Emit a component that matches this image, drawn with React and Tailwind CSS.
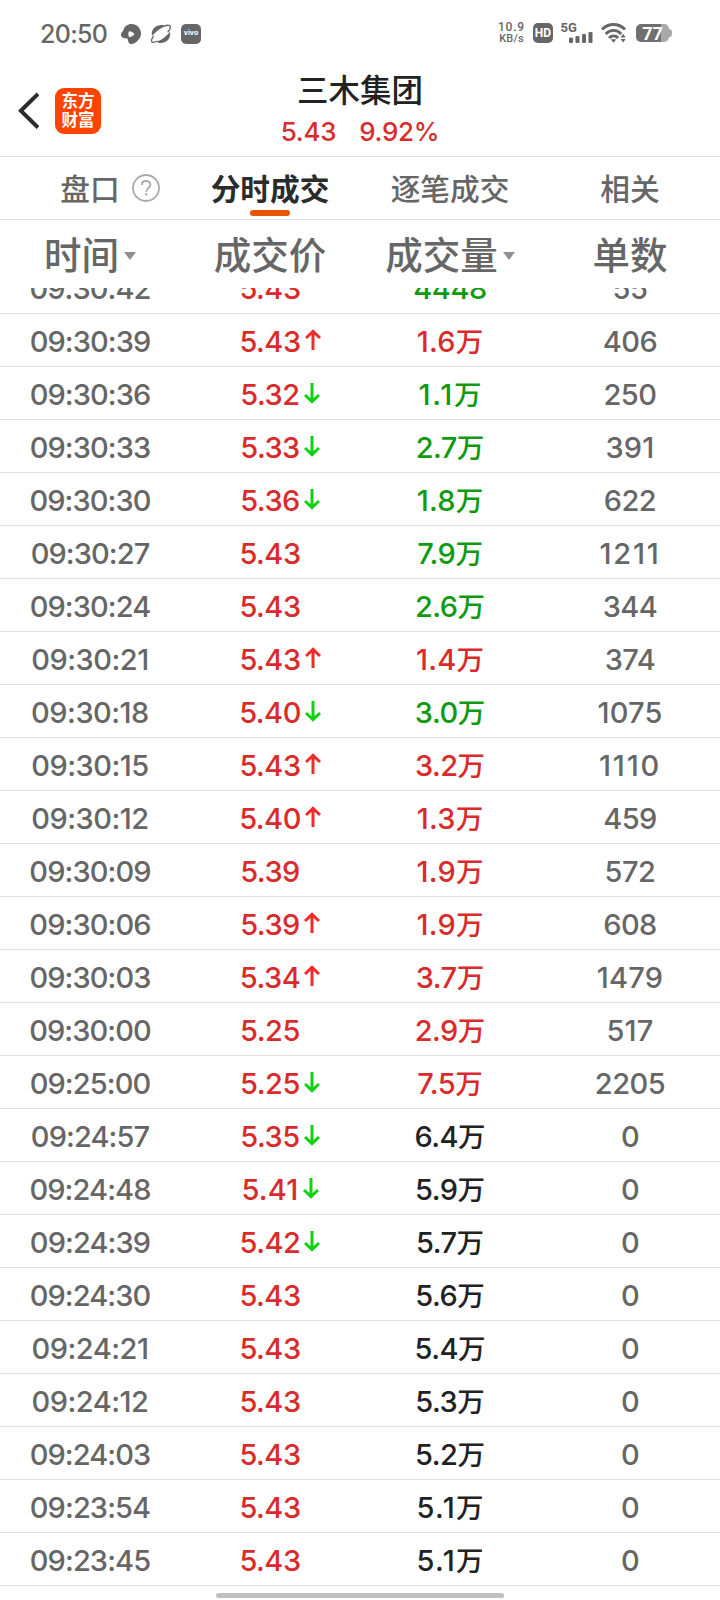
import clsx from 'clsx'

const RED = 'text-[#d92b2b]'
const GREEN = 'text-[#0f9a0f]'
const BLACK = 'text-[#222222]'

// [time, price, direction, volume, volume color, orders]
const trades = [
  ['09:30:42', '5.43', '', '4448', GREEN, '55'],
  ['09:30:39', '5.43', 'up', '1.6万', RED, '406'],
  ['09:30:36', '5.32', 'down', '1.1万', GREEN, '250'],
  ['09:30:33', '5.33', 'down', '2.7万', GREEN, '391'],
  ['09:30:30', '5.36', 'down', '1.8万', GREEN, '622'],
  ['09:30:27', '5.43', '', '7.9万', GREEN, '1211'],
  ['09:30:24', '5.43', '', '2.6万', GREEN, '344'],
  ['09:30:21', '5.43', 'up', '1.4万', RED, '374'],
  ['09:30:18', '5.40', 'down', '3.0万', GREEN, '1075'],
  ['09:30:15', '5.43', 'up', '3.2万', RED, '1110'],
  ['09:30:12', '5.40', 'up', '1.3万', RED, '459'],
  ['09:30:09', '5.39', '', '1.9万', RED, '572'],
  ['09:30:06', '5.39', 'up', '1.9万', RED, '608'],
  ['09:30:03', '5.34', 'up', '3.7万', RED, '1479'],
  ['09:30:00', '5.25', '', '2.9万', RED, '517'],
  ['09:25:00', '5.25', 'down', '7.5万', RED, '2205'],
  ['09:24:57', '5.35', 'down', '6.4万', BLACK, '0'],
  ['09:24:48', '5.41', 'down', '5.9万', BLACK, '0'],
  ['09:24:39', '5.42', 'down', '5.7万', BLACK, '0'],
  ['09:24:30', '5.43', '', '5.6万', BLACK, '0'],
  ['09:24:21', '5.43', '', '5.4万', BLACK, '0'],
  ['09:24:12', '5.43', '', '5.3万', BLACK, '0'],
  ['09:24:03', '5.43', '', '5.2万', BLACK, '0'],
  ['09:23:54', '5.43', '', '5.1万', BLACK, '0'],
  ['09:23:45', '5.43', '', '5.1万', BLACK, '0'],
]

// the digit 1 is narrow, so numbers with ones in them are tracked wider
function tracking(text) {
  const ones = text.split('1').length - 1
  const length = text.replace('万', '').length
  if (length > 5) return ones ? 'tracking-[-0.5px]' : 'tracking-[-0.9px]'
  if (ones > 1) return 'tracking-[1.8px]'
  if (text.endsWith('.1万')) return 'tracking-[1.4px]'
  if (ones) return 'tracking-[0.2px]'
  return 'tracking-[-0.5px]'
}

function StatusBar() {
  return (
    <div className="h-[66px] pl-10 pr-[48px] flex items-center justify-between text-[#666666]">
      <div className="flex items-center pt-0.5">
        <span className="w-[81px] text-[25px] leading-none font-medium tracking-[-0.7px] pt-px">20:50</span>
        <svg className="w-5 h-5 mr-2.5 -mt-px" viewBox="0 0 20 20" fill="currentColor">
          <path fillRule="evenodd" d="M10.500 0C15.800 0 20 4.200 20 9.600c0 3.200-1.300 5.100-3.300 6.900-1.700 2-3.700 3.500-6.200 3.500-2.600 0-3.600-2.200-3.900-5.600C2.700 14.400 0 13.600 0 10.700c0-2.300 1.600-2.500 2.400-4.700C3.500 2.500 6.500 0 10.500 0zM8 7.200c-.8 1.600-.8 4 0 5.800 2.300 0 4.200-1.100 5.500-2.900C12.200 8.200 10.300 7.200 8 7.200z" />
        </svg>
        <svg className="w-5 h-5 mr-2.5 -mt-px" viewBox="0 0 20 20" fill="currentColor">
          <path d="M1 12C-.2 5.500 4.500 1 10.500 1c1.800 0 3.200.500 4.400 1.300C10 3.500 4.500 8 1 12z" />
          <path d="M19 8c1.200 6.500-3.500 11-9 11-1.800 0-3.600-.5-4.800-1.300C10.300 16.500 15.500 12 19 8z" />
          <path d="M13.500 1.900C18 .4 20.300 1.600 19 4.800c-.5 1.200-1.300 2.300-2.300 3.400M2.600 11.800C.4 15-.1 17.500 1.300 18.100c1.100.500 3-.1 5-1.100" fill="none" stroke="currentColor" strokeWidth="1.300" />
        </svg>
        <span className="w-5 h-5 -mt-px rounded-[5px] bg-[#666666] text-white text-[7px] font-bold flex items-center justify-center">
          vivo
        </span>
      </div>
      <div className="flex items-center">
        <div className="w-[27px] mr-[8px] flex flex-col items-center text-[12px] leading-[11px] font-medium whitespace-nowrap font-['Roboto',sans-serif]">
          <span className="tracking-[0.8px]">10.9</span>
          <span className="text-[11px] tracking-[0.2px]">KB/s</span>
        </div>
        <span className="w-5 h-5 mr-[8px] rounded-[5px] bg-[#666666] text-white text-[12px] leading-none font-bold font-['Roboto',sans-serif] flex items-center justify-center">
          HD
        </span>
        <svg className="w-8 h-5 mr-[8px] overflow-visible" viewBox="0 0 32 20" fill="currentColor">
          <text x="-0.500" y="9.300" fontSize="13" fontWeight="700" fontFamily="Roboto">5G</text>
          <rect x="8" y="14.500" width="4" height="5.500" rx="1.200" />
          <rect x="14.500" y="13" width="4" height="7" rx="1.200" />
          <rect x="21" y="11" width="4" height="9" rx="1.200" />
          <rect x="27.500" y="9" width="4" height="11" rx="1.200" />
        </svg>
        <svg className="w-[26px] h-5 mr-[9px]" viewBox="0 0 26 20" fill="none" stroke="currentColor" strokeWidth="2.900">
          <path d="M1 6.500C7.500-.2 17.500-.2 24 6.500" />
          <path d="M4.700 10.900c4.600-4.700 11-4.700 15.600 0" />
          <path d="M8 15c2.800-2.700 6.500-2.700 9.200 0" />
          <path d="M9.600 16.300h5.800l-2.900 3.500zM19.600 14.400h5l-2.500-3.600zM19.600 16h5l-2.500 3.600z" fill="currentColor" stroke="none" />
        </svg>
        <div className="flex items-center">
          <div className="w-[33px] h-[18px] rounded-[5px] bg-linear-to-r from-[#707070] from-77% to-[#a9a9a9] to-77% text-white text-[18px] leading-[19px] font-bold font-['Roboto',sans-serif] text-center">
            77
          </div>
          <div className="w-[3px] h-2 rounded-r-sm bg-[#a9a9a9]" />
        </div>
      </div>
    </div>
  )
}

function Header() {
  return (
    <header className="h-[91px] border-b border-[#e0e0e0] grid grid-cols-[1fr_auto_1fr]">
      <div className="flex items-start pl-[18px] pt-[22px]">
        <svg className="w-[21px] h-[45px] mr-4" viewBox="0 0 21 45" fill="none" stroke="#2b2b2b" strokeWidth="4">
          <path d="M20 6L2.800 22.800 20 39.500" />
        </svg>
        <div className="w-[46px] h-[46px] rounded-[9px] bg-[#ff4400] text-white text-[16.500px] leading-[19px] font-bold flex flex-col items-center justify-center pb-px">
          <span>东方</span>
          <span>财富</span>
        </div>
      </div>
      <div className="flex flex-col items-center pt-px">
        <h1 className="text-[31.500px] leading-[47px] font-medium text-[#222222]">三木集团</h1>
        <div className={clsx('flex gap-[23px] text-[26px] leading-9 font-medium tracking-[-0.3px]', RED)}>
          <span>5.43</span>
          <span>9.92%</span>
        </div>
      </div>
    </header>
  )
}

function Tabs() {
  return (
    <nav className="h-[63px] border-b border-[#e0e0e0] grid grid-cols-4 text-[29.700px] leading-[64px] font-medium text-[#666666] text-center">
      <div className="h-[62px]">
        <span className="relative">
          盘口
          <svg className="absolute left-[72px] top-1/2 -mt-[15px] w-7 h-7" viewBox="0 0 28 28" fill="none" stroke="#aaaaaa" strokeWidth="1.800">
            <circle cx="14" cy="14" r="13" />
            <path d="M9.800 11c0-5.400 8.600-5.200 8.600-.3 0 3.300-4.200 3.400-4.200 7" />
            <path d="M14.200 19.300v2.200" strokeWidth="2.200" />
          </svg>
        </span>
      </div>
      <div className="relative h-[62px] font-bold text-[#2b2b2b]">
        分时成交
        <span className="absolute left-1/2 bottom-[3px] -translate-x-1/2 w-10 h-1.5 rounded-full bg-[#ea5504]" />
      </div>
      <div className="h-[62px]">逐笔成交</div>
      <div className="h-[62px]">相关</div>
    </nav>
  )
}

function Caret() {
  return (
    <svg className="w-3 h-2 ml-[5px]" viewBox="0 0 12 8" fill="#8c8f94">
      <path d="M0 0h12L6 8z" />
    </svg>
  )
}

function Arrow({ dir }) {
  return (
    <svg
      className={clsx('absolute left-full top-1/2 -mt-[13px] ml-[4px] w-4 h-[22px]', dir === 'up' ? 'text-[#ee2c2c]' : 'text-[#12d012] rotate-180')}
      viewBox="0 0 16 22"
      fill="none"
      stroke="currentColor"
      strokeWidth="3"
    >
      <path d="M8 2v19M1 9l7-6.700L15 9" />
    </svg>
  )
}

export default function App() {
  return (
    <div className="relative w-[720px] h-[1600px] overflow-hidden bg-white font-['Inter','Noto_Sans_CJK_SC',sans-serif]">
      <StatusBar />
      <Header />
      <Tabs />
      <div className="h-[68px] pt-[3px] grid grid-cols-4 text-[37.500px] leading-[65px] font-medium text-[#666666]">
        <div className="flex items-center justify-center">时间<Caret /></div>
        <div className="flex items-center justify-center">成交价</div>
        <div className="flex items-center justify-center">成交量<Caret /></div>
        <div className="flex items-center justify-center">单数</div>
      </div>
      {/* list is scrolled, so the first row is cut by the column header */}
      <div className="h-[1312px] overflow-hidden flex flex-col justify-start">
        <div className="-mt-[27px]">
          {trades.map(([time, price, dir, volume, color, orders]) => (
            <div key={time} className="h-[53px] border-b border-[#e0e0e0] grid grid-cols-4 text-[29px] leading-[56px] font-medium text-center text-[#666666]">
              <div className={clsx('h-[52px]', tracking(time))}>{time}</div>
              <div className={clsx('h-[52px]', tracking(price), RED)}>
                <span className="relative inline-block">
                  {price}
                  {dir && <Arrow dir={dir} />}
                </span>
              </div>
              <div className={clsx('h-[52px]', tracking(volume), color)}>
                {volume.replace('万', '')}
                {volume.endsWith('万') && <span className="text-[27.500px] tracking-normal">万</span>}
              </div>
              <div className={clsx('h-[52px]', tracking(orders))}>{orders}</div>
            </div>
          ))}
        </div>
      </div>
      <div className="absolute bottom-0.5 left-1/2 -translate-x-1/2 w-72 h-[5px] rounded-full bg-[#c0c0c0]" />
    </div>
  )
}
